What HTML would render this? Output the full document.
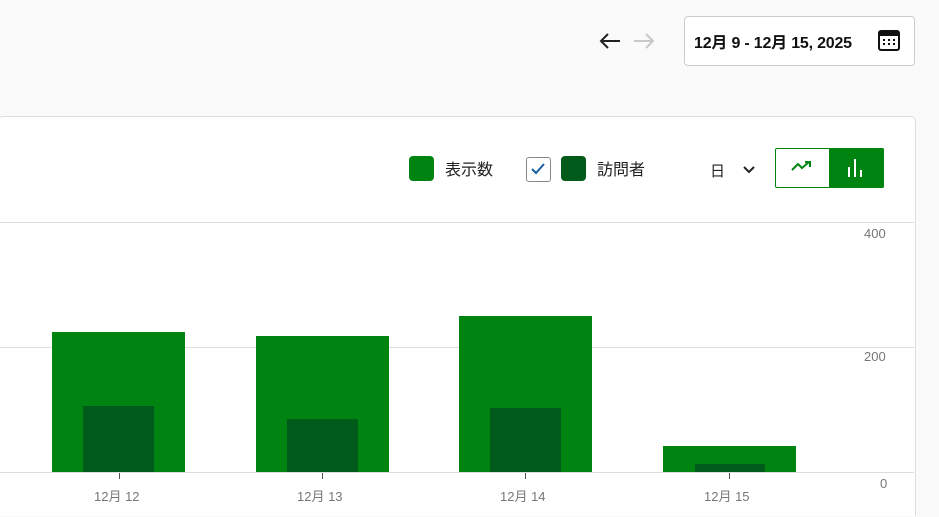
<!DOCTYPE html>
<html><head><meta charset="utf-8"><style>
html,body{margin:0;width:939px;height:517px;overflow:hidden}
body{background:#fafafa;position:relative;font-family:"Liberation Sans","Noto Sans CJK JP",sans-serif;}
.abs{position:absolute}
.card{left:-2px;top:116px;width:916px;height:399px;background:#fff;border:1px solid #ddd;border-bottom:none;border-radius:5px 5px 0 0}
.grid{left:0;width:914px;height:1px;background:#ddd}
.bar{background:#008411}
.dk{background:#005a1a}
.ax{color:#777;font-size:13px}
.tick{width:1px;height:6px;background:#555;top:473px}
</style></head><body>
<svg class="abs" style="left:598px;top:32px" width="24" height="18"><path d="M22 9 H3 M10 2 L3 9 L10 16" stroke="#222" stroke-width="2" fill="none"/></svg>
<svg class="abs" style="left:632px;top:32px" width="24" height="18"><path d="M2 9 H21 M14 2 L21 9 L14 16" stroke="#c8c8c8" stroke-width="2" fill="none"/></svg>
<div class="abs" style="left:684px;top:16px;width:229px;height:48px;border:1px solid #ccc;border-radius:4px;background:#fff"></div>
<div class="abs" style="left:694px;top:29px;font-size:16px;font-weight:bold;color:#111;letter-spacing:-0.2px">12月 9 - 12月 15, 2025</div>
<svg class="abs" style="left:877px;top:29px" width="24" height="24" viewBox="0 0 24 24"><rect x="2" y="2" width="20" height="19" rx="2" fill="none" stroke="#111" stroke-width="2"/><rect x="2" y="2" width="20" height="5" fill="#111"/><g fill="#111"><rect x="6" y="10" width="2" height="2"/><rect x="11" y="10" width="2" height="2"/><rect x="16" y="10" width="2" height="2"/><rect x="6" y="14" width="2" height="2"/><rect x="11" y="14" width="2" height="2"/><rect x="16" y="14" width="2" height="2"/></g></svg>
<div class="abs card"></div>
<div class="abs" style="left:409px;top:156px;width:25px;height:25px;background:#008411;border-radius:4px"></div>
<div class="abs" style="left:445px;top:156px;font-size:16px;color:#222">表示数</div>
<div class="abs" style="left:526px;top:157px;width:23px;height:23px;border:1px solid #888;border-radius:3px;background:#fff"></div>
<svg class="abs" style="left:530px;top:162px" width="16" height="14"><path d="M2 7 L6 11 L14 2" stroke="#1a5fa0" stroke-width="2" fill="none"/></svg>
<div class="abs" style="left:561px;top:156px;width:25px;height:25px;background:#005a1a;border-radius:4px"></div>
<div class="abs" style="left:597px;top:156px;font-size:16px;color:#222">訪問者</div>
<div class="abs" style="left:710px;top:160px;font-size:15px;color:#222">日</div>
<svg class="abs" style="left:742px;top:165px" width="14" height="10"><path d="M2 2 L7 7 L12 2" stroke="#222" stroke-width="2" fill="none"/></svg>
<div class="abs" style="left:775px;top:148px;width:107px;height:38px;border:1px solid #008411;border-radius:2px;background:#fff"></div>
<div class="abs" style="left:829px;top:148px;width:55px;height:40px;background:#008411;border-radius:0 2px 2px 0"></div>
<svg class="abs" style="left:791px;top:159px" width="22" height="14"><path d="M1 11 L7 5 L11 9 L18 3 M14 3 H19 V8" stroke="#008411" stroke-width="2" fill="none"/></svg>
<svg class="abs" style="left:846px;top:157px" width="20" height="22"><g fill="#fff"><rect x="2" y="10" width="2" height="10"/><rect x="8" y="2" width="2" height="18"/><rect x="14" y="13" width="2" height="7"/></g></svg>
<div class="abs grid" style="top:222px"></div>
<div class="abs grid" style="top:347px"></div>
<div class="abs grid" style="top:472px"></div>
<div class="abs ax" style="left:864px;top:226px">400</div>
<div class="abs ax" style="left:864px;top:349px">200</div>
<div class="abs ax" style="left:880px;top:476px">0</div>
<div class="abs bar" style="left:52px;top:332px;width:133px;height:140px"></div>
<div class="abs dk" style="left:83px;top:406px;width:71px;height:66px"></div>
<div class="abs bar" style="left:256px;top:336px;width:133px;height:136px"></div>
<div class="abs dk" style="left:287px;top:419px;width:71px;height:53px"></div>
<div class="abs bar" style="left:459px;top:316px;width:133px;height:156px"></div>
<div class="abs dk" style="left:490px;top:408px;width:71px;height:64px"></div>
<div class="abs bar" style="left:663px;top:446px;width:133px;height:26px"></div>
<div class="abs dk" style="left:695px;top:464px;width:70px;height:8px"></div>
<div class="abs tick" style="left:119px"></div>
<div class="abs tick" style="left:322px"></div>
<div class="abs tick" style="left:525px"></div>
<div class="abs tick" style="left:729px"></div>
<div class="abs ax" style="left:94px;top:486px">12月 12</div>
<div class="abs ax" style="left:297px;top:486px">12月 13</div>
<div class="abs ax" style="left:500px;top:486px">12月 14</div>
<div class="abs ax" style="left:704px;top:486px">12月 15</div>
</body></html>
